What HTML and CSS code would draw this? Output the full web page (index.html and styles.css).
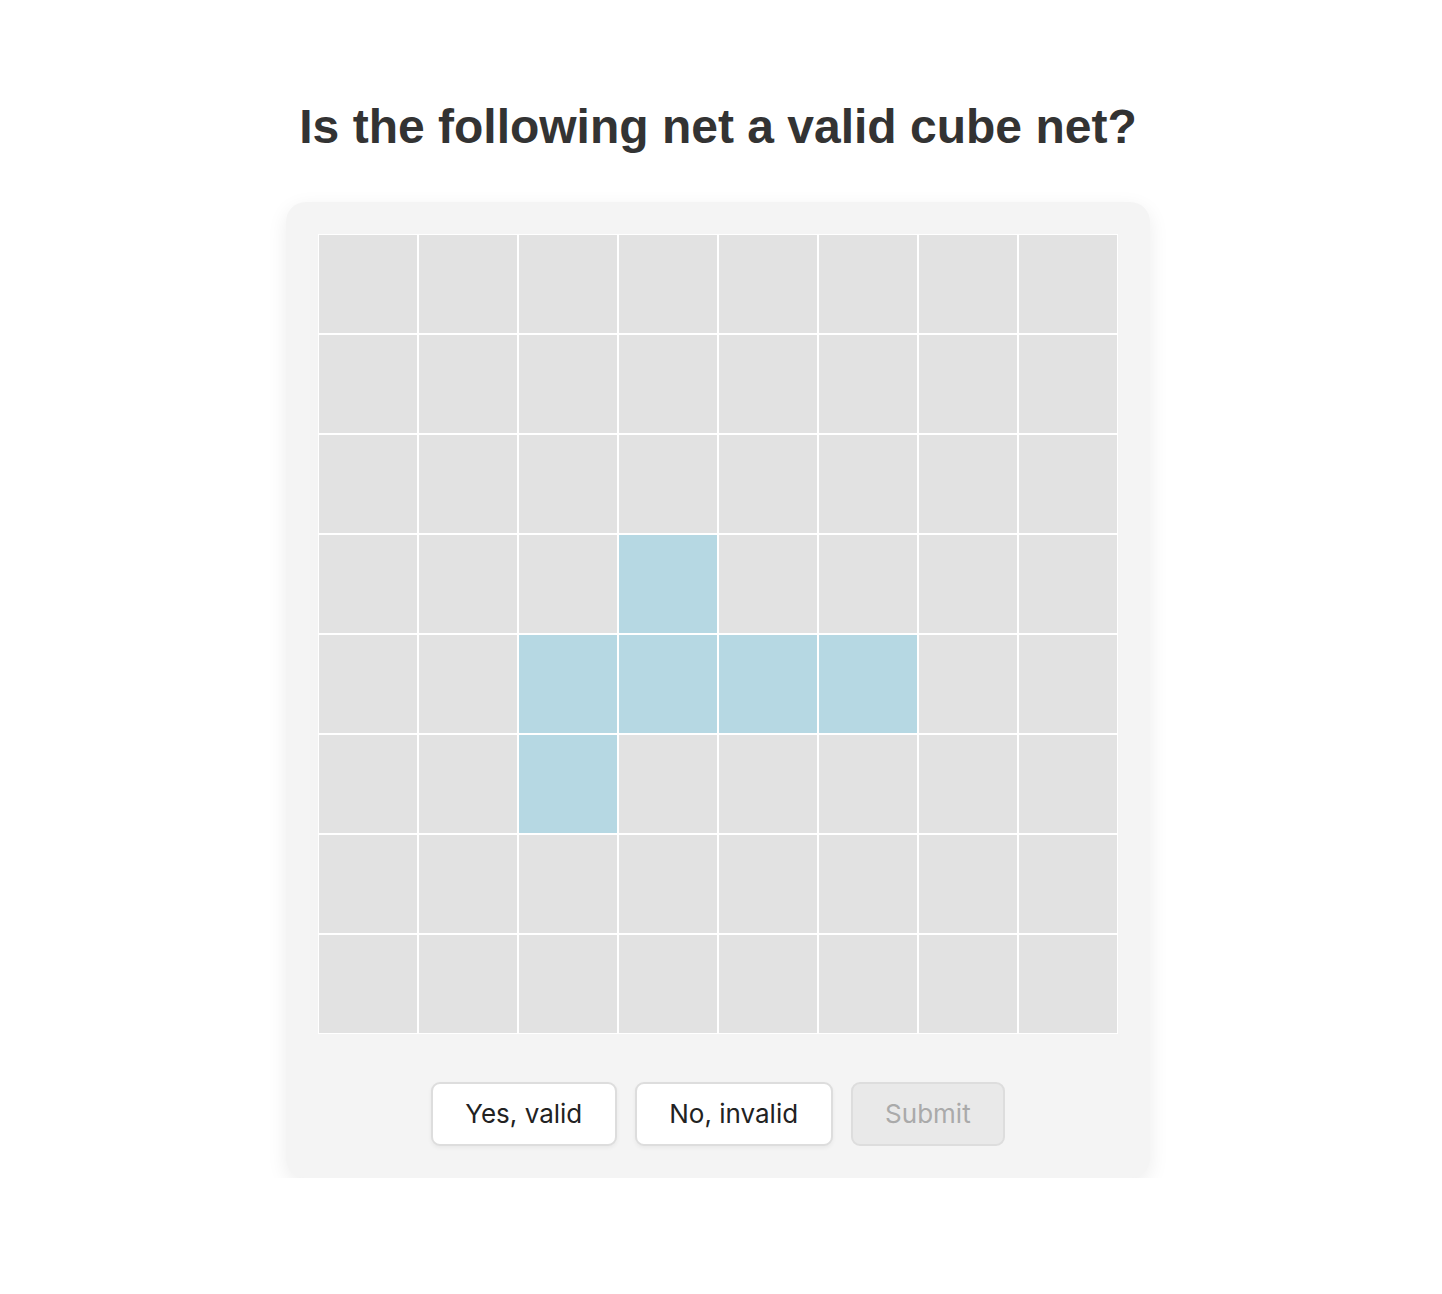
FILE: index.html
```html
<!DOCTYPE html>
<html lang="en">
<head>
<meta charset="utf-8">
<title>Cube net</title>
<link rel="stylesheet" href="styles.css">
</head>
<body>
<main class="page">
  <h1 class="title">Is the following net a valid cube net?</h1>
  <section class="card">
    <div class="grid">
      <div class="cell"></div><div class="cell"></div><div class="cell"></div><div class="cell"></div><div class="cell"></div><div class="cell"></div><div class="cell"></div><div class="cell"></div>
      <div class="cell"></div><div class="cell"></div><div class="cell"></div><div class="cell"></div><div class="cell"></div><div class="cell"></div><div class="cell"></div><div class="cell"></div>
      <div class="cell"></div><div class="cell"></div><div class="cell"></div><div class="cell"></div><div class="cell"></div><div class="cell"></div><div class="cell"></div><div class="cell"></div>
      <div class="cell"></div><div class="cell"></div><div class="cell"></div><div class="cell on"></div><div class="cell"></div><div class="cell"></div><div class="cell"></div><div class="cell"></div>
      <div class="cell"></div><div class="cell"></div><div class="cell on"></div><div class="cell on"></div><div class="cell on"></div><div class="cell on"></div><div class="cell"></div><div class="cell"></div>
      <div class="cell"></div><div class="cell"></div><div class="cell on"></div><div class="cell"></div><div class="cell"></div><div class="cell"></div><div class="cell"></div><div class="cell"></div>
      <div class="cell"></div><div class="cell"></div><div class="cell"></div><div class="cell"></div><div class="cell"></div><div class="cell"></div><div class="cell"></div><div class="cell"></div>
      <div class="cell"></div><div class="cell"></div><div class="cell"></div><div class="cell"></div><div class="cell"></div><div class="cell"></div><div class="cell"></div><div class="cell"></div>
    </div>
    <div class="actions">
      <button class="btn">Yes, valid</button>
      <button class="btn">No, invalid</button>
      <button class="btn btn-disabled" disabled>Submit</button>
    </div>
  </section>
</main>
</body>
</html>
```
FILE: styles.css
```css
* { box-sizing: border-box; }
html, body { margin: 0; padding: 0; background: #ffffff; }
body { font-family: "Liberation Sans", Arial, sans-serif; color: #333333; }

.page {
  display: flex;
  flex-direction: column;
  align-items: center;
  padding: 99px 6px 0 0;
}

.title {
  margin: 0 0 47px 0;
  font-family: "Liberation Sans", Arial, sans-serif;
  font-weight: 700;
  font-size: 48px;
  line-height: 56px;
  color: #333333;
}

.card {
  background: #f4f4f4;
  border-radius: 20px;
  padding: 32px;
  box-shadow: 0 6px 20px rgba(0, 0, 0, 0.08);
  display: flex;
  flex-direction: column;
  align-items: center;
}

.grid {
  display: grid;
  grid-template-columns: repeat(8, 100px);
  grid-template-rows: repeat(8, 100px);
}

.cell {
  background: #e2e2e2;
  border: 1px solid #ffffff;
}

.cell.on { background: #b6d8e3; }

.actions {
  display: flex;
  gap: 18px;
  margin-top: 48px;
}

.btn {
  font-family: Inter, "Noto Sans", sans-serif;
  font-size: 26px;
  line-height: 30px;
  padding: 15px 32.5px;
  background: #ffffff;
  color: #222222;
  border: 2px solid #dddddd;
  border-radius: 9px;
  box-shadow: 0 2px 4px rgba(0, 0, 0, 0.05);
}

.btn-disabled {
  background: #e9e9e9;
  color: #aaaaaa;
  box-shadow: none;
}
```
